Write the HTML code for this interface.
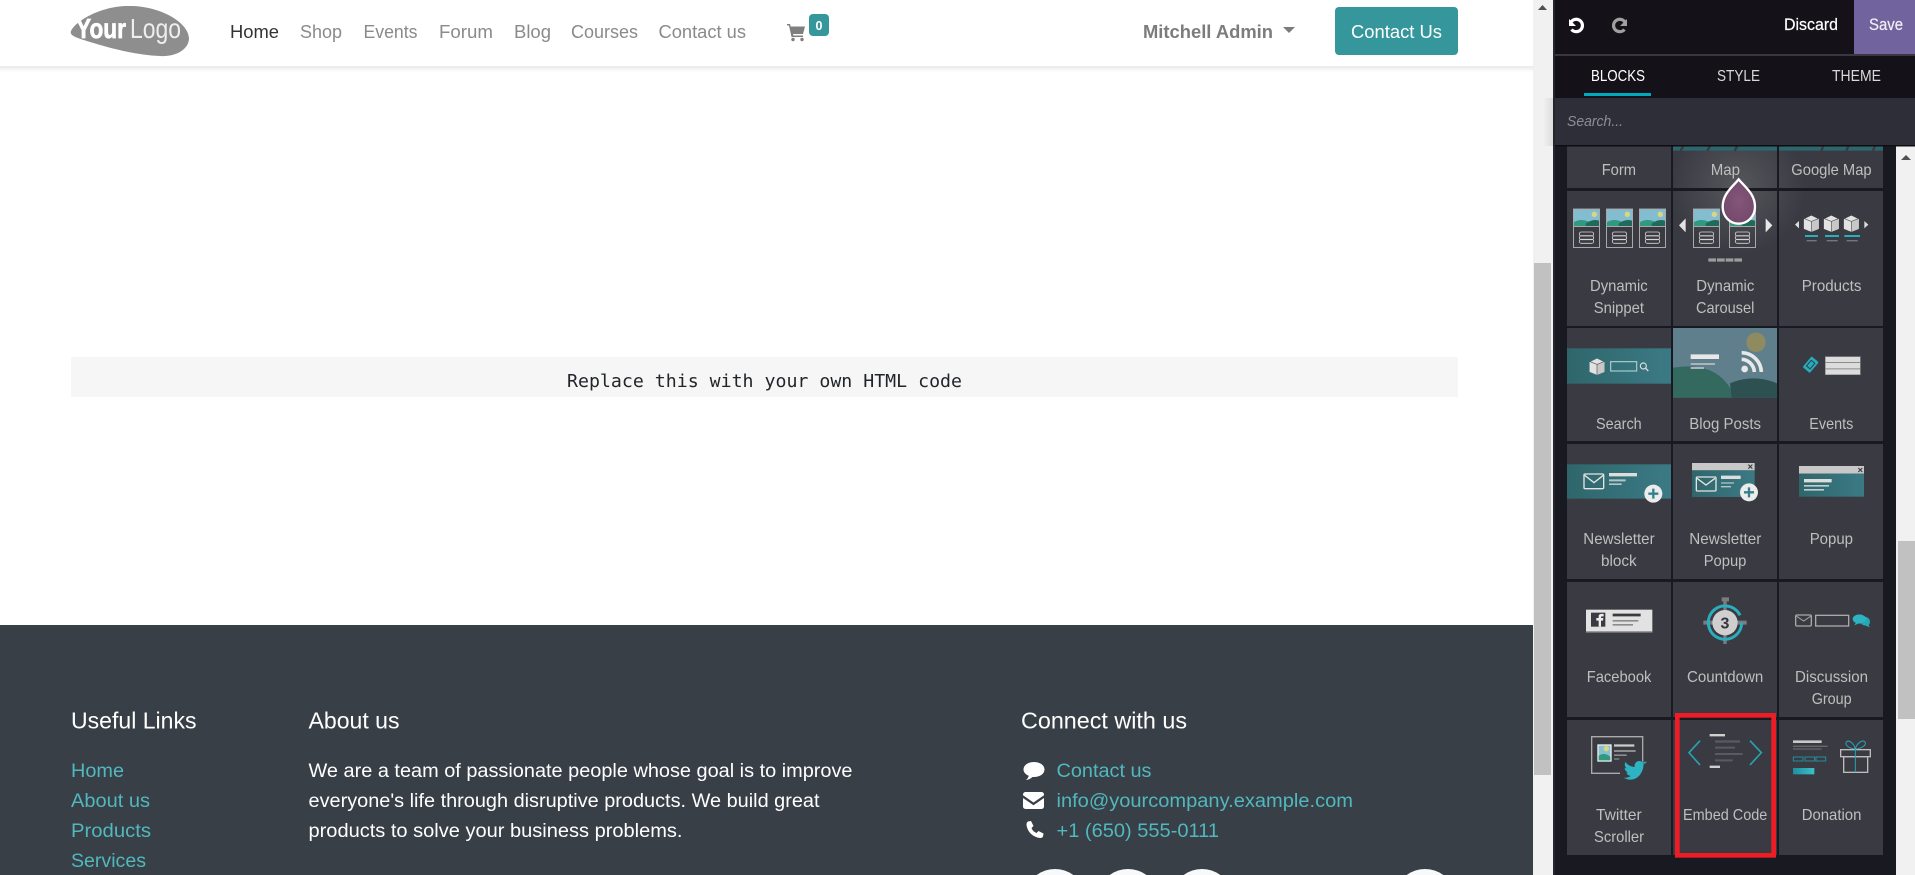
<!DOCTYPE html>
<html><head><meta charset="utf-8"><title>Website Editor</title>
<style>
html,body{margin:0;padding:0;background:#fff;width:1915px;height:875px;overflow:hidden}
svg{display:block}
text{font-family:"Liberation Sans",sans-serif}
.nav{font-size:18px;fill:#8a8a8a}
.h{font-size:23px;fill:#fff}
.l{font-size:19px;fill:#50b8be}
.p{font-size:19px;fill:#fff}
.b{font-size:16px;fill:#bfbfbf}
.t{font-size:15.5px;fill:#d9d9d9}
</style></head><body>
<svg xmlns="http://www.w3.org/2000/svg" width="1915" height="875" viewBox="0 0 1915 875">
<defs>
<linearGradient id="tg" x1="0" x2="1" y1="0" y2="0"><stop offset="0" stop-color="#2f666b"/><stop offset="1" stop-color="#3b7a85"/></linearGradient>
<linearGradient id="sh" x1="0" x2="0" y1="0" y2="1"><stop offset="0" stop-color="#e9e9e9"/><stop offset="1" stop-color="#fff"/></linearGradient>
<linearGradient id="sd" x1="0" x2="1" y1="0" y2="0"><stop offset="0" stop-color="#000" stop-opacity="0"/><stop offset="1" stop-color="#000" stop-opacity=".1"/></linearGradient>
<linearGradient id="tl" x1="0" x2="1" y1="0" y2="0"><stop offset="0" stop-color="#1f8f9c"/><stop offset="1" stop-color="#3cc0cc"/></linearGradient>
<radialGradient id="glow"><stop offset="0" stop-color="#fff" stop-opacity=".14"/><stop offset="1" stop-color="#fff" stop-opacity="0"/></radialGradient>
<radialGradient id="drop"><stop offset="0" stop-color="#85567a"/><stop offset="1" stop-color="#744a6b"/></radialGradient>
<clipPath id="tiles"><rect x="1567" y="146" width="104" height="42"/><rect x="1673" y="146" width="104" height="42"/><rect x="1779" y="146" width="104" height="42"/><rect x="1567" y="191" width="104" height="135"/><rect x="1673" y="191" width="104" height="135"/><rect x="1779" y="191" width="104" height="135"/></clipPath>
<g id="dyn">
<rect x="0" y="0" width="81" height="52" fill="#84bcd0"/>
<circle cx="64" cy="17" r="8" fill="#dbd682"/>
<path d="M0 42Q22 28 45 38T81 36V53H0Z" fill="#2f9a80"/>
<path d="M38 45Q60 28 81 37V53H38Z" fill="#21695a"/>
<rect x="1.500" y="1.500" width="78" height="115" fill="none" stroke="#a9a9a9" stroke-width="3"/>
<rect x="1" y="52" width="79" height="3" fill="#a9a9a9"/>
<rect x="19" y="70" width="43" height="12" rx="6" fill="none" stroke="#d4d4d4" stroke-width="2.600"/>
<rect x="19" y="81" width="43" height="12" rx="6" fill="none" stroke="#d4d4d4" stroke-width="2.600"/>
<rect x="19" y="92" width="43" height="12" rx="6" fill="none" stroke="#d4d4d4" stroke-width="2.600"/>
</g>
<g id="cube"><g transform="scale(1.12)"><path d="M0-22 20-12V14L0 22-20 14V-12Z" fill="#e2e2e2"/><path d="M0-6 20-14V14L0 22Z" fill="#c8c8c8"/><path d="M0-6-20-14M0-6 20-14M0-6V22" stroke="#55555c" stroke-width="1.800" fill="none"/></g></g>
<g id="plus"><circle r="27" fill="#ececec"/><path d="M-15 0H15M0-15V15" stroke="#34808c" stroke-width="7"/></g>
</defs>

<!-- page -->
<rect width="1533" height="875" fill="#fff"/>
<rect x="0" y="66" width="1533" height="6" fill="url(#sh)"/>

<!-- logo -->
<path d="M71 31C77 19 105 5 130 6C160 6 188 22 189 38C189 50 175 57 160 56C135 55 110 48 90 42C78 38 69 36 71 31Z" fill="#8e8e8e"/>
<text x="76" y="38" font-size="28" font-weight="bold" fill="#fff" stroke="#fff" stroke-width=".7" textLength="50" lengthAdjust="spacingAndGlyphs">Your</text>
<text x="130" y="38" font-size="28" fill="#eee" textLength="51" lengthAdjust="spacingAndGlyphs">Logo</text>

<!-- nav -->
<g class="nav">
<text class="nav" x="230" y="38" style="fill:#333" textLength="49" lengthAdjust="spacingAndGlyphs">Home</text>
<text class="nav" x="300" y="38" textLength="42" lengthAdjust="spacingAndGlyphs">Shop</text>
<text class="nav" x="363.500" y="38" textLength="54" lengthAdjust="spacingAndGlyphs">Events</text>
<text class="nav" x="439" y="38" textLength="54" lengthAdjust="spacingAndGlyphs">Forum</text>
<text class="nav" x="514" y="38" textLength="37" lengthAdjust="spacingAndGlyphs">Blog</text>
<text class="nav" x="571" y="38" textLength="67" lengthAdjust="spacingAndGlyphs">Courses</text>
<text class="nav" x="658.500" y="38" textLength="87.500" lengthAdjust="spacingAndGlyphs">Contact us</text>
</g>
<!-- cart -->
<path d="M787 24h3l.7 2.500H805l-2 7.500H793l.4 1.500H803v1.500h-11.500L789 25.500h-2Z" fill="#7f7f7f"/>
<circle cx="793" cy="39.500" r="1.700" fill="#7f7f7f"/><circle cx="802" cy="39.500" r="1.700" fill="#7f7f7f"/>
<rect x="809" y="14" width="20" height="22" rx="4" fill="#35979c"/>
<text x="819" y="30" font-size="12.500" font-weight="bold" fill="#fff" text-anchor="middle">0</text>

<text x="1143" y="38" font-size="18" font-weight="bold" fill="#7c7c7c" textLength="130" lengthAdjust="spacingAndGlyphs">Mitchell Admin</text>
<path d="M1283 27h12l-6 6Z" fill="#7c7c7c"/>
<rect x="1335" y="7" width="123" height="48" rx="4" fill="#35979c"/>
<text x="1351" y="38" font-size="18" fill="#fff" textLength="91" lengthAdjust="spacingAndGlyphs">Contact Us</text>

<!-- code -->
<rect x="71" y="357" width="1387" height="40" fill="#f6f6f6"/>
<text x="567" y="387" font-size="18" fill="#212529" style="font-family:'DejaVu Sans Mono','Liberation Mono',monospace" textLength="395" lengthAdjust="spacingAndGlyphs">Replace this with your own HTML code</text>

<!-- footer -->
<rect x="0" y="625" width="1533" height="250" fill="#393f47"/>
<text class="h" x="71" y="728.500" textLength="125.500" lengthAdjust="spacingAndGlyphs">Useful Links</text>
<text class="h" x="308.500" y="728.500" textLength="91" lengthAdjust="spacingAndGlyphs">About us</text>
<text class="h" x="1021" y="728.500" textLength="166" lengthAdjust="spacingAndGlyphs">Connect with us</text>

<text class="l" x="71" y="777" textLength="53" lengthAdjust="spacingAndGlyphs">Home</text>
<text class="l" x="71" y="807" textLength="79" lengthAdjust="spacingAndGlyphs">About us</text>
<text class="l" x="71" y="837" textLength="80" lengthAdjust="spacingAndGlyphs">Products</text>
<text class="l" x="71" y="867" textLength="75" lengthAdjust="spacingAndGlyphs">Services</text>

<text class="p" x="308.500" y="777" textLength="544" lengthAdjust="spacingAndGlyphs">We are a team of passionate people whose goal is to improve</text>
<text class="p" x="308.500" y="807" textLength="511" lengthAdjust="spacingAndGlyphs">everyone's life through disruptive products. We build great</text>
<text class="p" x="308.500" y="837" textLength="374" lengthAdjust="spacingAndGlyphs">products to solve your business problems.</text>

<text class="l" x="1056.500" y="777" textLength="95" lengthAdjust="spacingAndGlyphs">Contact us</text>
<text class="l" x="1056.500" y="807" textLength="296.500" lengthAdjust="spacingAndGlyphs">info@yourcompany.example.com</text>
<text class="l" x="1056.500" y="837" textLength="162.500" lengthAdjust="spacingAndGlyphs">+1 (650) 555-0111</text>

<path d="M1034 762c6 0 10.500 3.300 10.500 7.500s-4.500 7.500-10.500 7.500h-1.500c-1.500 1.500-4 2.700-6.500 3 1.500-1.200 2.500-2.700 2.700-4.200-3-1.300-5.200-3.600-5.200-6.300 0-4.200 4.500-7.500 10.500-7.500Z" fill="#fff"/>
<path d="M1023 794.500a2.500 2.500 0 0 1 2.500-2.500h16a2.500 2.500 0 0 1 2.500 2.500v.7l-10.500 7.300-10.500-7.300ZM1023 798l10.500 7.300L1044 798v8.500a2.500 2.500 0 0 1-2.500 2.500h-16a2.500 2.500 0 0 1-2.500-2.500Z" fill="#fff"/>
<path d="M1028 821.500l3 -.5 2.500 5-2 2c1 2.500 2.600 4 5 5l2-2 5 2.500-.5 3c-.3 1-1.500 1.500-2.500 1.500-7.500-.5-13.500-6.500-14-13.500 0-1.500.7-2.700 1.500-3Z" fill="#fff"/>

<path d="M1036.700 875A31 31 0 0 1 1073.300 875Z" fill="#f8f9fa"/>
<path d="M1109.700 875A31 31 0 0 1 1146.300 875Z" fill="#f8f9fa"/>
<path d="M1183.700 875A31 31 0 0 1 1220.300 875Z" fill="#f8f9fa"/>
<path d="M1406.700 875A31 31 0 0 1 1443.300 875Z" fill="#f8f9fa"/>

<!-- left scrollbar -->
<rect x="1533" y="0" width="20" height="875" fill="#f1f1f1"/>
<path d="M1538 10l4.500-5 4.500 5Z" fill="#505050"/>
<rect x="1534" y="263" width="17" height="512" fill="#c1c1c1"/>
<rect x="1543" y="98" width="12" height="48" fill="url(#sd)"/>

<!-- panel -->
<rect x="1553" y="0" width="343" height="875" fill="#191921"/>
<rect x="1553" y="0" width="2" height="875" fill="#26262e"/>
<rect x="1896" y="146" width="19" height="729" fill="#f1f1f1"/>
<path d="M1901 160l5-5 5 5Z" fill="#505050"/>
<rect x="1898" y="541" width="17" height="178" fill="#c1c1c1"/>

<!-- tiles -->
<g fill="#3a3a42">
<rect x="1567" y="146" width="104" height="42"/><rect x="1673" y="146" width="104" height="42"/><rect x="1779" y="146" width="104" height="42"/>
<rect x="1567" y="191" width="104" height="135"/><rect x="1673" y="191" width="104" height="135"/><rect x="1779" y="191" width="104" height="135"/>
<rect x="1567" y="328" width="104" height="113"/><rect x="1673" y="328" width="104" height="113"/><rect x="1779" y="328" width="104" height="113"/>
<rect x="1567" y="444" width="104" height="135"/><rect x="1673" y="444" width="104" height="135"/><rect x="1779" y="444" width="104" height="135"/>
<rect x="1567" y="582" width="104" height="135"/><rect x="1673" y="582" width="104" height="135"/><rect x="1779" y="582" width="104" height="135"/>
<rect x="1567" y="720" width="104" height="135"/><rect x="1673" y="720" width="104" height="135"/><rect x="1779" y="720" width="104" height="135"/>
</g>
<g clip-path="url(#tiles)"><circle cx="1738" cy="187" r="68" fill="url(#glow)"/></g>

<!-- icons row0/1 in 3x coordinates -->
<g transform="translate(1540,0) scale(.33333)">
<path d="M399 438H711V452H399Z" fill="#2e666e"/><path d="M717 438H1029V452H717Z" fill="#2e666e"/>
<path d="M430 438l-8 14M510 438l-8 14M592 438l-8 14M850 438l-6 14M925 438l-6 14M1005 438l-6 14" stroke="#3a3a42" stroke-width="7"/>
<use href="#dyn" x="99" y="626"/><use href="#dyn" x="198" y="626"/><use href="#dyn" x="297" y="626"/>
<use href="#dyn" x="459" y="626"/><use href="#dyn" x="567" y="626"/>
<path d="M437 655V697L417 676Z" fill="#e2e2e2"/><path d="M677 655V697L697 676Z" fill="#e8e8e8"/>
<path d="M505 775h23v10h-23ZM531 775h23v10h-23ZM557 775h23v10h-23ZM583 775h23v10h-23Z" fill="#9c9c9c"/>
<path d="M596 538C616 562 645 582 645 620C645 650 622 671 596 671C570 671 548 650 548 620C548 582 576 562 596 538Z" fill="url(#drop)" stroke="#fff" stroke-width="7"/>
<path d="M777 663V685L765 674Z" fill="#dcdcdc"/><path d="M973 663V685L985 674Z" fill="#dcdcdc"/>
<use href="#cube" x="814" y="671"/><use href="#cube" x="874" y="671"/><use href="#cube" x="934" y="671"/>
<path d="M795 708h39M855 708h42M913 708h47" stroke="#25b0c0" stroke-width="6"/>
<path d="M800 722h30M860 722h33M920 722h33" stroke="#76767c" stroke-width="4"/>
</g>

<g transform="translate(1540,320) scale(.33333)">
<!-- search -->
<rect x="81" y="85" width="312" height="106" fill="url(#tg)"/>
<g transform="translate(171,140)"><use href="#cube"/></g>
<rect x="212" y="125" width="78" height="28" fill="none" stroke="#a8cdd0" stroke-width="3.500"/>
<circle cx="310" cy="138" r="9" fill="none" stroke="#ddd" stroke-width="3.500"/><path d="M317 145l8 8" stroke="#ddd" stroke-width="4"/>
<!-- blog -->
<rect x="399" y="24" width="312" height="209" fill="#5f7f8d"/>
<circle cx="648" cy="67" r="29" fill="#8f8b60"/>
<path d="M399 143Q540 120 585 233H399Z" fill="#34695f"/>
<path d="M570 190Q640 160 711 190V233H575Z" fill="#2c5150"/>
<path d="M452 103h85v14h-85Z" fill="#e8e8e8"/><path d="M452 129h73v6h-73ZM452 141h40v6h-40Z" fill="#a9b5ba"/>
<circle cx="614" cy="147" r="10" fill="#e8e8e8"/>
<path d="M605 118A40 40 0 0 1 643 156M605 98A60 60 0 0 1 664 156" fill="none" stroke="#e8e8e8" stroke-width="11"/>
<!-- events -->
<g transform="translate(812,134) rotate(40)"><rect x="-14" y="-21" width="28" height="42" rx="3" fill="#25adbd"/><rect x="-7" y="-11" width="14" height="22" fill="none" stroke="#3a3a42" stroke-width="3"/></g>
<rect x="855" y="109" width="107" height="56" fill="#8c8c8c"/>
<path d="M857 111h103v15H857ZM857 129h103v16H857ZM857 148h103v15H857Z" fill="#dcdcdc"/>
<!-- newsletter block -->
<rect x="81" y="433" width="312" height="103" fill="url(#tg)"/>
<rect x="132" y="462" width="59" height="44" rx="3" fill="none" stroke="#e4e4e4" stroke-width="4"/><path d="M134 466l28 22 28-22" fill="none" stroke="#e4e4e4" stroke-width="4"/>
<path d="M207 459h84v10h-84Z" fill="#ddd"/><path d="M207 478h50v6h-50ZM207 490h38v5h-38Z" fill="#b5c5c7"/>
<use href="#plus" x="340" y="521"/>
<!-- newsletter popup -->
<rect x="456" y="429" width="188" height="22" fill="#c8c8c8"/><rect x="456" y="451" width="188" height="80" fill="url(#tg)"/>
<path d="M625 434l12 12M637 434l-12 12" stroke="#333" stroke-width="3"/>
<rect x="469" y="471" width="59" height="42" rx="3" fill="none" stroke="#e4e4e4" stroke-width="4"/><path d="M471 475l27 20 27-20" fill="none" stroke="#e4e4e4" stroke-width="4"/>
<path d="M543 467h59v10h-59Z" fill="#ddd"/><path d="M543 487h39v4h-39ZM543 498h30v4h-30Z" fill="#b5c5c7"/>
<use href="#plus" x="627" y="517"/>
<!-- popup -->
<rect x="777" y="438" width="195" height="23" fill="#c8c8c8"/><rect x="777" y="461" width="195" height="69" fill="url(#tg)"/>
<path d="M955 444l12 12M967 444l-12 12" stroke="#333" stroke-width="3"/>
<path d="M792 477h83v10h-83Z" fill="#ddd"/><path d="M792 495h75v5h-75ZM792 507h60v5h-60Z" fill="#c0cfd1"/>
</g>

<g transform="translate(1540,575) scale(.33333)">
<!-- facebook -->
<rect x="138" y="104" width="199" height="68" fill="#e2e2e2"/>
<rect x="138" y="168" width="199" height="4" fill="#9a9a9a"/>
<rect x="153" y="113" width="43" height="42" fill="#3a3a42"/>
<path d="M176 155V137H169V129H176V124C176 118 180 116 191 117V124H186C184 124 183 125 183 127V129H190L189 137H183V155Z" fill="#eee"/>
<path d="M218 116h84v8h-84Z" fill="#3a3a42"/><path d="M218 135h77v5h-77ZM218 147h61v5h-61Z" fill="#8c8c8c"/>
<!-- countdown -->
<path d="M545 67h22v12h-7v128h-10V79h-5ZM490 137h130v12H490Z" fill="#7c7c80"/>
<path d="M600 121A50 50 0 1 0 605 143" fill="none" stroke="#2aaebd" stroke-width="9"/>
<circle cx="555" cy="143" r="38" fill="#cfcfcf"/>
<text x="555" y="160" font-size="48" font-weight="bold" fill="#34343c" text-anchor="middle">3</text>
<!-- discussion -->
<rect x="767" y="120" width="47" height="33" rx="4" fill="none" stroke="#a9a9a9" stroke-width="4"/><path d="M769 123l22 15 22-15" fill="none" stroke="#a9a9a9" stroke-width="3"/>
<rect x="827" y="121" width="99" height="32" fill="none" stroke="#a9a9a9" stroke-width="4"/>
<path d="M975 125c11 3 16 9 15 17-1 4-2 6-4 8l3 7c-5-2-8-3-11-5-6 0-11-2-15-6 7 0 14-10 12-21Z" fill="#27a6b5"/>
<ellipse cx="958" cy="132" rx="20" ry="14" fill="#2db3c2"/><path d="M948 142l-5 9 13-6Z" fill="#2db3c2"/>
<!-- twitter -->
<path d="M240 595H155V485H308V560" fill="none" stroke="#aaa" stroke-width="4"/>
<rect x="172" y="508" width="43" height="52" fill="#eee"/><rect x="176" y="512" width="35" height="44" fill="#87c0d2"/><circle cx="199" cy="521" r="8" fill="#dbd682"/><path d="M176 556V543Q190 530 211 545V556Z" fill="#2f9a80"/>
<path d="M222 508h61v7h-61Z" fill="#ccc"/><path d="M222 525h65v6h-65ZM222 538h38v5h-38ZM222 550h16v4h-16Z" fill="#8c8c8c"/>
<path d="M319 559c-3 3-6 4-8 5 0 30-18 50-40 50-9 0-15-3-20-6 8 1 15-1 21-5-7-1-11-5-13-10h6c-7-3-11-8-11-15 2 1 4 2 6 2-6-5-7-12-4-19 7 9 16 14 28 15-2-10 5-18 14-18 4 0 8 2 10 4 3-1 6-2 8-3-1 3-3 6-6 7 3 0 6-1 9-2Z" fill="#2db3c2"/>
<!-- embed -->
<path d="M480 497L447 533L480 570" fill="none" stroke="#27a2af" stroke-width="5"/>
<path d="M630 497L664 533L630 570" fill="none" stroke="#27a2af" stroke-width="5"/>
<path d="M509 477h46v7h-46ZM509 572h31v7h-31Z" fill="#cfcfcf"/>
<path d="M525 496h75v7h-75ZM525 515h60v6h-60ZM525 534h83v6h-83ZM525 553h53v6h-53Z" fill="#5a5a60"/>
<!-- donation -->
<path d="M759 496h86v8h-86Z" fill="#c8c8c8"/><path d="M759 512h104v4H759ZM759 520h86v4H759Z" fill="#68686e"/>
<path d="M760 546h29v12h-29ZM795 546h29v12h-29ZM828 546h29v12h-29Z" fill="none" stroke="#248e9a" stroke-width="3"/>
<rect x="759" y="579" width="64" height="19" fill="url(#tl)"/>
<rect x="911" y="545" width="72" height="47" fill="none" stroke="#bdbdbd" stroke-width="4"/>
<rect x="902" y="524" width="89" height="21" fill="none" stroke="#bdbdbd" stroke-width="4"/>
<path d="M946 523V592" stroke="#27a6b5" stroke-width="3"/>
<path d="M946 522C925 520 912 508 920 500C928 494 942 505 946 522C950 505 966 494 974 500C982 508 968 520 946 522Z" fill="none" stroke="#27a6b5" stroke-width="3"/>
<!-- highlight -->
<rect x="412" y="421" width="289" height="420" fill="none" stroke="#ee1c25" stroke-width="14"/>
</g>

<!-- labels -->
<text class="b" x="1601.700" y="175" textLength="34.300" lengthAdjust="spacingAndGlyphs">Form</text>
<text class="b" x="1710.700" y="175" textLength="29.300" lengthAdjust="spacingAndGlyphs">Map</text>
<text class="b" x="1791.300" y="175" textLength="80.300" lengthAdjust="spacingAndGlyphs">Google Map</text>
<text class="b" x="1590" y="291" textLength="57.700" lengthAdjust="spacingAndGlyphs">Dynamic</text>
<text class="b" x="1593.700" y="313" textLength="50.300" lengthAdjust="spacingAndGlyphs">Snippet</text>
<text class="b" x="1696.300" y="291" textLength="58" lengthAdjust="spacingAndGlyphs">Dynamic</text>
<text class="b" x="1696" y="313" textLength="58.300" lengthAdjust="spacingAndGlyphs">Carousel</text>
<text class="b" x="1801.700" y="291" textLength="59.700" lengthAdjust="spacingAndGlyphs">Products</text>
<text class="b" x="1596" y="429" textLength="45.700" lengthAdjust="spacingAndGlyphs">Search</text>
<text class="b" x="1689.300" y="429" textLength="71.700" lengthAdjust="spacingAndGlyphs">Blog Posts</text>
<text class="b" x="1809.300" y="429" textLength="44" lengthAdjust="spacingAndGlyphs">Events</text>
<text class="b" x="1583.300" y="544" textLength="71.300" lengthAdjust="spacingAndGlyphs">Newsletter</text>
<text class="b" x="1601" y="566" textLength="35.700" lengthAdjust="spacingAndGlyphs">block</text>
<text class="b" x="1689.300" y="544" textLength="72" lengthAdjust="spacingAndGlyphs">Newsletter</text>
<text class="b" x="1703.700" y="566" textLength="42.700" lengthAdjust="spacingAndGlyphs">Popup</text>
<text class="b" x="1809.700" y="544" textLength="43.300" lengthAdjust="spacingAndGlyphs">Popup</text>
<text class="b" x="1586.700" y="682" textLength="64.700" lengthAdjust="spacingAndGlyphs">Facebook</text>
<text class="b" x="1687" y="682" textLength="76.300" lengthAdjust="spacingAndGlyphs">Countdown</text>
<text class="b" x="1795" y="682" textLength="73" lengthAdjust="spacingAndGlyphs">Discussion</text>
<text class="b" x="1811.700" y="704" textLength="40" lengthAdjust="spacingAndGlyphs">Group</text>
<text class="b" x="1596" y="820" textLength="45.700" lengthAdjust="spacingAndGlyphs">Twitter</text>
<text class="b" x="1594" y="842" textLength="50" lengthAdjust="spacingAndGlyphs">Scroller</text>
<text class="b" x="1683" y="820" textLength="84.300" lengthAdjust="spacingAndGlyphs">Embed Code</text>
<text class="b" x="1801.700" y="820" textLength="59.700" lengthAdjust="spacingAndGlyphs">Donation</text>

<!-- panel top -->
<rect x="1555" y="0" width="360" height="54" fill="#141218"/>
<rect x="1555" y="54" width="360" height="2" fill="#38383e"/>
<rect x="1555" y="56" width="360" height="42" fill="#141218"/>
<rect x="1555" y="98" width="360" height="47" fill="#2e2e38"/>
<rect x="1555" y="145" width="360" height="1.500" fill="#0e0e12"/>
<rect x="1854" y="0" width="61" height="54" fill="#71639e"/>
<path d="M1570.800 22.500A6.200 6.200 0 1 1 1571.500 29.500" fill="none" stroke="#fff" stroke-width="3.200"/><path d="M1569 19v7h7Z" fill="#fff"/>
<path d="M1625.200 22.500A6.200 6.200 0 1 0 1624.500 29.500" fill="none" stroke="#a0a0a0" stroke-width="3.200"/><path d="M1627 19v7h-7Z" fill="#a0a0a0"/>
<text x="1784" y="30" font-size="16.500" fill="#fff" stroke="#fff" stroke-width=".2" textLength="54" lengthAdjust="spacingAndGlyphs">Discard</text>
<text x="1869" y="30" font-size="16.500" fill="#f0eef6" stroke="#f0eef6" stroke-width=".2" textLength="34" lengthAdjust="spacingAndGlyphs">Save</text>
<text class="t" x="1591" y="81" style="fill:#fff" textLength="54" lengthAdjust="spacingAndGlyphs">BLOCKS</text>
<text class="t" x="1717" y="81" textLength="43" lengthAdjust="spacingAndGlyphs">STYLE</text>
<text class="t" x="1832" y="81" textLength="49" lengthAdjust="spacingAndGlyphs">THEME</text>
<rect x="1584" y="93" width="67" height="3" fill="#00a9bd"/>
<text x="1567" y="126" font-size="15" font-style="italic" fill="#8d8d93" textLength="56" lengthAdjust="spacingAndGlyphs">Search...</text>
</svg>
</body></html>
